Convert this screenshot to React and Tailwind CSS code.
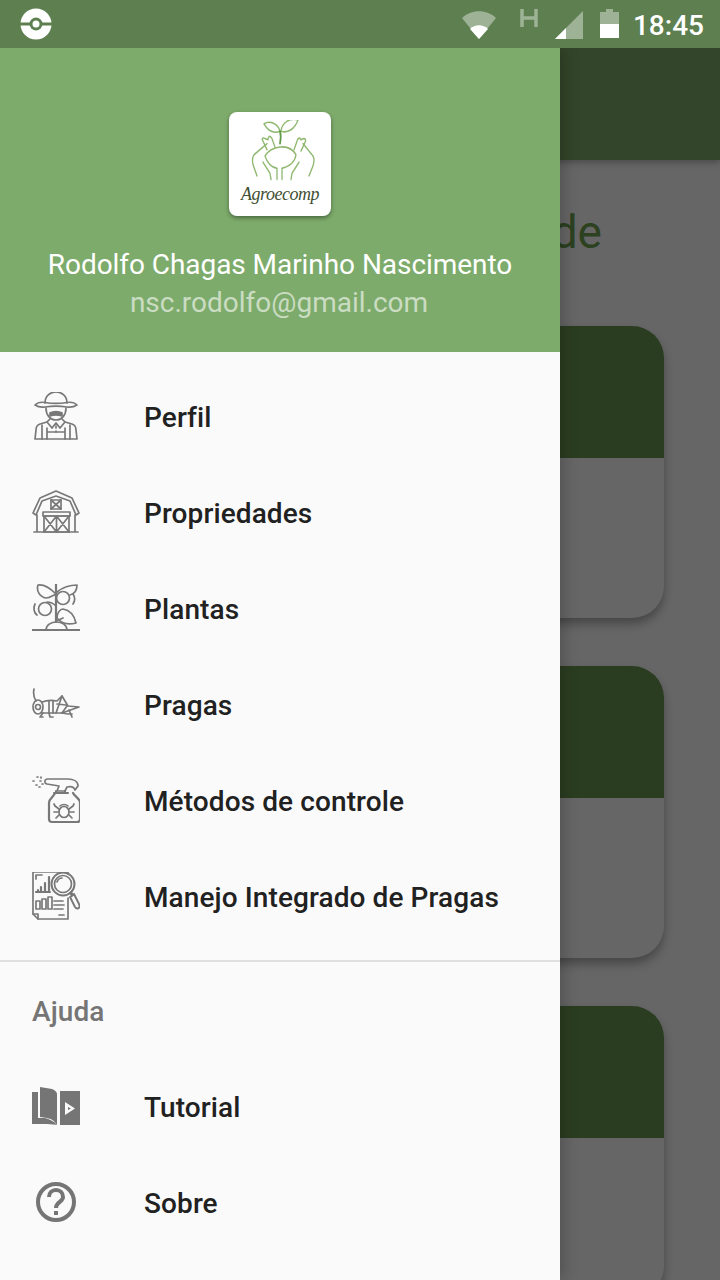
const menuItems = [
  { name: 'Perfil', icon: FarmerIcon },
  { name: 'Propriedades', icon: BarnIcon },
  { name: 'Plantas', icon: PlantIcon },
  { name: 'Pragas', icon: GrasshopperIcon },
  { name: 'Métodos de controle', icon: SprayIcon },
  { name: 'Manejo Integrado de Pragas', icon: ReportIcon },
];

const helpItems = [
  { name: 'Tutorial', icon: BookIcon },
  { name: 'Sobre', icon: HelpIcon },
];

function LineIcon({ children }) {
  return (
    <svg viewBox="0 0 48 48" className="w-12 h-12 shrink-0" fill="none" stroke="#787878" strokeWidth="1.700" strokeLinecap="round" strokeLinejoin="round">
      {children}
    </svg>
  );
}

function FarmerIcon() {
  return (
    <LineIcon>
      <path d="M13 11C13 4 18 0 24 0s11 4 11 11" />
      <path d="M3 13c3-3 7-3 10-2.500 7 1.200 15 1.200 22 0 3-.5 7-.5 10 2.500-3 2-7 2.500-10 2-7-1-15-1-22 0-3 .5-7 0-10-2z" />
      <path d="M14 16c0 7 4 12 10 12s10-5 10-12" />
      <path d="M18 21c3-2 9-2 12 0v3c-3-1-9-1-12 0z" fill="#787878" />
      <path d="M18 27l-3 3 5 6 4-5 4 5 5-6-3-3" />
      <path d="M15 30l-7 2c-3 1-4 3-4 6l-1 9h42l-1-9c0-3-1-5-4-6l-7-2" />
      <path d="M10 33v14M38 33v14M15 36v11M33 36v11M15 40h18" />
      <path d="M24 34v2M24 39v1" />
    </LineIcon>
  );
}

function BarnIcon() {
  return (
    <LineIcon>
      <path d="M1 25L8 10l16-7 16 7 7 15-3 2-6-14-14-5-14 5-6 14z" />
      <path d="M5 27v17M43 27v17M2 44h44" />
      <rect x="19" y="12" width="10" height="9" />
      <path d="M19 12l10 9M29 12l-10 9" />
      <rect x="11" y="24" width="27" height="4" />
      <rect x="12" y="28" width="25" height="16" />
      <path d="M24.500 28v16M12 28l12.500 16M24.500 28L12 44M24.500 28L37 44M37 28L24.500 44" />
    </LineIcon>
  );
}

function PlantIcon() {
  return (
    <LineIcon>
      <path d="M0 46h48" strokeWidth="2.200" />
      <path d="M14 46c0-5 5-8 10.500-8S35 41 35 46" />
      <path d="M24 38V0" strokeWidth="2.200" />
      <path d="M24 10C18 4 12 0 6 1c-2 6 2 12 8 13 4 0 6-2 10-4z" />
      <path d="M25 8c5-4 12-7 20-7 0 6-3 9-7 10" />
      <circle cx="31" cy="14" r="6.500" />
      <path d="M41 10c2 3 2 7 0 10" />
      <path d="M24 22c-2-2-5-4-9-4" />
      <circle cx="13" cy="25" r="6.500" />
      <path d="M3 20c-2 4-1 9 2 11" />
      <path d="M25 34c0-5 3-9 6-9 6 1 11 5 13 14-8 2-15 0-19-5z" />
      <path d="M24 37c3-1 5-2 7-3" />
    </LineIcon>
  );
}

function GrasshopperIcon() {
  return (
    <LineIcon>
      <path d="M2 9c-1 5 0 9 2 12" />
      <ellipse cx="6" cy="27" rx="5" ry="7" />
      <circle cx="6" cy="27" r="2.500" />
      <path d="M10 22c5-2 10-2 15-1l5-5 6 10 11 1-17 6H10" />
      <path d="M17 21v12M21 21v12" />
      <path d="M24 33l6-17M30 33l5-7M25 24l9 1" />
      <path d="M11 33l-3 4h3M17 33l1 4h3M30 33l6 1h4M37 30l3 7" />
    </LineIcon>
  );
}

function SprayIcon() {
  return (
    <LineIcon>
      <path d="M1 5h1M5 1h1M9 1v1M4 9h1M8 5h1M10 8h1M7 11h1" />
      <path d="M15 3h21c5 0 10 2 10 7l-3 4c-1-3-4-4-8-3l-2 4h-8l2-5-12-2c-3-1-3-4 0-5z" />
      <path d="M24 15v2M33 15v2M22 17h14" strokeWidth="2" />
      <path d="M23 17c-1 4-6 5-6 10v16c0 2 1 3 3 3h25c2 0 3-1 3-3V27c0-5-5-6-7-10" strokeWidth="2.200" />
      <ellipse cx="32" cy="36" rx="5" ry="5.500" />
      <path d="M28 30c2-2 6-2 8 0M27 33l-4-3-1-2M37 33l4-3 1-2M26 36h-4M38 36h4M27 39l-3 3M37 39l3 3" />
    </LineIcon>
  );
}

function ReportIcon() {
  return (
    <LineIcon>
      <path d="M1 0h35v2M1 0v42l5 5h30V26" />
      <path d="M1 42h5v5" />
      <path d="M4 3h6M4 3v4" />
      <path d="M6 18v1M9 15v4M13 11v8M17 5v14M4 20h14" strokeWidth="2.200" />
      <rect x="4" y="29" width="4" height="8" />
      <rect x="10" y="27" width="4" height="10" />
      <rect x="16" y="25" width="4" height="12" />
      <path d="M22 29h9M22 33h10M22 37h9M27 43h5" />
      <circle cx="31" cy="12" r="11.500" strokeWidth="2" />
      <circle cx="31" cy="12" r="8.500" />
      <path d="M25 10c1-3 3-4 5-4" />
      <path d="M38 21l2 3-2 1 5 10c2 3 6 1 4-3l-5-10-1 1-2-3" strokeWidth="1.900" />
    </LineIcon>
  );
}

function BookIcon() {
  return (
    <svg viewBox="0 0 48 48" className="w-12 h-12 shrink-0">
      <path fillRule="evenodd" fill="#757575" d="M28 9h20v34H28z M33 20v13l10-6.500z M36 25l3 1.500-3 1.500z" />
      <path fill="#757575" d="M8 5l12 2c3 1 5 3 5 5v31c-3-5-6-6-10-7l-7-1z" />
      <path fill="#757575" d="M0 10h6v26h7c4 1 9 3 12 7-5-1-10-1-13-1H0z" />
    </svg>
  );
}

function HelpIcon() {
  return (
    <svg viewBox="0 0 48 48" className="w-12 h-12 shrink-0" fill="none" stroke="#757575" strokeWidth="4">
      <circle cx="24" cy="24" r="18" />
      <path d="M17 19c0-4 3-7 7-7s7 3 7 7c0 5-7 5-7 11" strokeLinecap="butt" />
      <path d="M24 33v4" />
    </svg>
  );
}

function AgroLogo() {
  return (
    <svg viewBox="0 13 80 50" preserveAspectRatio="none" className="w-[80px] h-[62px]" fill="none" stroke="#8fb86f" strokeWidth="1.300" strokeLinecap="round" strokeLinejoin="round">
      <path d="M40 22c-2-6-10-9-16-6 4 6 10 8 16 6z" />
      <path d="M41 22c1-7 9-11 17-9-3 7-10 11-17 9z" />
      <path d="M40 32c1-4 1-7 0-10" stroke="#5f9a45" strokeWidth="1.700" />
      <path d="M27 37l-4-7c-2-2 0-3 2-2l3 1c0-3 2-4 4-1l3 7" />
      <path d="M54 37l3-7c1-3 3-3 4-1l3-1c2 0 2 2 1 3l-4 7" />
      <path d="M27 32L14 41c-2 2-2 4-1 8l4 9" />
      <path d="M63 32l10 10c2 3 1 5 0 8l-4 8" />
      <path d="M25 42c6-8 24-11 31-1-1 7-9 10-14 11v9M25 42c2 5 6 9 12 10v9" />
      <path d="M23 47l7 9 1 5M59 47l-7 9-1 5" />
    </svg>
  );
}

function StatusBar() {
  return (
    <div className="relative z-20 h-12 shrink-0 bg-[#5e8050] flex items-center pl-5 pr-4 text-white">
      <svg viewBox="0 0 32 32" className="w-8 h-8">
        <circle cx="16" cy="16" r="15.500" fill="#fff" />
        <rect x="0" y="14.500" width="32" height="3" fill="#5e8050" />
        <circle cx="16" cy="16" r="6.500" fill="#5e8050" />
        <circle cx="16" cy="16" r="3.500" fill="#fff" />
      </svg>
      <div className="ml-auto flex items-center">
        <svg viewBox="0 0 34 28" className="w-[34px] h-7 mt-[1px]">
          <path d="M0 7C9-2 25-2 34 7L17 28z" fill="#fff" fillOpacity="0.4" />
          <path d="M8 18c5-5 13-5 18 0l-9 10z" fill="#fff" />
        </svg>
        <svg viewBox="0 0 18 18" className="w-[18px] h-[18px] ml-[24px] mb-[12px]" fill="none" stroke="#fff" strokeOpacity="0.4" strokeWidth="3.500">
          <path d="M2 0v18M16 0v18M2 9h14" />
        </svg>
        <svg viewBox="0 0 28 28" className="w-7 h-7 ml-[17px] mt-[2px]">
          <path d="M28 0v28H0z" fill="#fff" fillOpacity="0.4" />
          <path d="M11 17v11H0z" fill="#fff" />
        </svg>
        <svg viewBox="0 0 19 29" className="w-[19px] h-[29px] ml-[17px] mt-[-1px]">
          <path d="M6 0h7v3h6v12H0V3h6z" fill="#fff" fillOpacity="0.4" />
          <path d="M0 15h19v14H0z" fill="#fff" />
        </svg>
        <span className="ml-[14px] mt-1 text-[28px] leading-none font-medium font-['Roboto',sans-serif]">18:45</span>
      </div>
    </div>
  );
}

function BackCard() {
  return (
    <div className="h-[292px] shrink-0 ml-14 mr-14 rounded-[32px] bg-[#666666] overflow-hidden shadow-[0_6px_10px_rgba(0,0,0,0.3)]">
      <div className="h-[132px] bg-[#2b3d20]" />
    </div>
  );
}

function MenuRow({ item }) {
  const Icon = item.icon;
  return (
    <div className="h-24 flex items-center gap-16 pl-8">
      <Icon />
      <span className="pt-1 text-[28px] tracking-[0.1px] font-medium text-[#212121]">{item.name}</span>
    </div>
  );
}

export default function App() {
  return (
    <div className="relative w-[720px] h-[1280px] overflow-hidden bg-[#666666] flex flex-col font-['Roboto',sans-serif]">
      <StatusBar />
      <div className="relative flex-1 flex flex-col overflow-hidden">
        {/* App behind the drawer */}
        <div className="h-28 shrink-0 bg-[#33452a] shadow-[0_3px_6px_rgba(0,0,0,0.25)]" />
        <div className="h-[166px] shrink-0 pt-[45px] pr-[118px] text-right text-[46px] leading-[54px] text-[#2c4120]">de</div>
        <div className="flex flex-col gap-12">
          <BackCard />
          <BackCard />
          <BackCard />
        </div>

        {/* Drawer */}
        <aside className="absolute top-0 bottom-0 left-0 w-[560px] bg-[#fafafa] shadow-[4px_0_14px_rgba(0,0,0,0.2)]">
          <div className="h-[304px] bg-[#7dab6b] flex flex-col items-center pt-16 text-[28px]">
            <div className="w-[102px] h-[104px] rounded-lg bg-white flex flex-col items-center pt-2 shadow-[0_2px_4px_rgba(0,0,0,0.4)]">
              <AgroLogo />
              <span className="text-[18px] leading-6 italic font-medium tracking-[-0.5px] text-[#3f4f33] font-['Liberation_Serif',serif]">Agroecomp</span>
            </div>
            <div className="mt-[30px] leading-[38px] tracking-[-0.06px] text-white">Rodolfo Chagas Marinho Nascimento</div>
            <div className="pr-[2px] leading-[38px] text-white/60">nsc.rodolfo@gmail.com</div>
          </div>
          <nav className="pt-4">
            {menuItems.map((item) => (
              <MenuRow key={item.name} item={item} />
            ))}
          </nav>
          <div className="mt-4 h-[2px] bg-[#e0e0e0]" />
          <div className="h-24 pl-8 pt-[33px] text-[28px] leading-[34px] tracking-[0.1px] font-medium text-[#757575]">Ajuda</div>
          {helpItems.map((item) => (
            <MenuRow key={item.name} item={item} />
          ))}
        </aside>
      </div>
    </div>
  );
}
